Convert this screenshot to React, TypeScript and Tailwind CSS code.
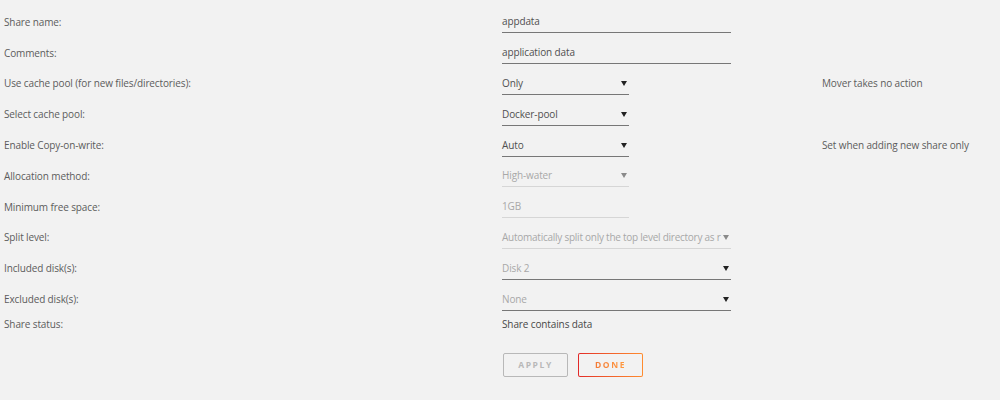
import React from 'react';

type Row = {
  label: string;
  value: string;
  kind: 'input' | 'select' | 'text';
  wide?: boolean;
  disabled?: boolean;
  note?: string;
};

const rows: Row[] = [
  { label: 'Share name:', value: 'appdata', kind: 'input', wide: true },
  { label: 'Comments:', value: 'application data', kind: 'input', wide: true },
  { label: 'Use cache pool (for new files/directories):', value: 'Only', kind: 'select', note: 'Mover takes no action' },
  { label: 'Select cache pool:', value: 'Docker-pool', kind: 'select' },
  { label: 'Enable Copy-on-write:', value: 'Auto', kind: 'select', note: 'Set when adding new share only' },
  { label: 'Allocation method:', value: 'High-water', kind: 'select', disabled: true },
  { label: 'Minimum free space:', value: '1GB', kind: 'input', disabled: true },
  { label: 'Split level:', value: 'Automatically split only the top level directory as r', kind: 'select', wide: true, disabled: true },
  { label: 'Included disk(s):', value: 'Disk 2', kind: 'select', wide: true, disabled: true },
  { label: 'Excluded disk(s):', value: 'None', kind: 'select', wide: true, disabled: true },
];

// disabled fields keep a dark line only for the disk pickers
const darkLine = (row: Row) => !row.disabled || row.value === 'Disk 2' || row.value === 'None';

function Caret({ light }: { light?: boolean }) {
  return (
    <svg width="6" height="5" viewBox="0 0 6 5" className="shrink-0">
      <path d="M0 0h6L3 5z" fill={light ? '#8a8a8a' : '#222'} />
    </svg>
  );
}

function Control({ row }: { row: Row }) {
  const width = row.wide ? 'w-[229px]' : 'w-[127px]';
  const line = darkLine(row) ? 'border-[#777]' : 'border-[#d6d6d6]';
  const text = row.disabled ? 'text-[#a8a8a8]' : 'text-[#505050]';
  return (
    <div className={`${width} h-[22px] flex items-center justify-between border-b ${line} ${text} pr-[2px]`}>
      <span className={`whitespace-nowrap ${row.label === 'Split level:' ? 'tracking-[-0.25px]' : ''}`}>{row.value}</span>
      {row.kind === 'select' && <Caret light={!darkLine(row)} />}
    </div>
  );
}

export default function App() {
  return (
    <div
      className="w-[1000px] h-[400px] bg-[#f2f2f2] text-[10px] tracking-[-0.12px] text-[#555] pt-[7px] pl-[4px] overflow-hidden"
      style={{ fontFamily: '"Open Sans", "DejaVu Sans", sans-serif' }}
    >
      {rows.map((row) => (
        <div key={row.label} className="flex items-center h-[30.8px]">
          <div className="w-[498px] text-[#5c5c5c]">{row.label}</div>
          <div className="w-[320px]">
            <Control row={row} />
          </div>
          {row.note && <div className="text-[#5c5c5c]">{row.note}</div>}
        </div>
      ))}
      <div className="flex items-center h-[20px]">
        <div className="w-[498px] text-[#5c5c5c]">Share status:</div>
        <div className="text-[#484848]">Share contains data</div>
      </div>
      <div className="flex gap-[10px] pl-[499px] mt-[18px]">
        <button className="w-[65px] h-[24px] rounded-[2px] border border-[#b8b8b8] text-[8.5px] font-bold tracking-[1.6px] text-[#b8b8b8]">
          APPLY
        </button>
        <div className="w-[65px] h-[24px] rounded-[2px] p-px bg-gradient-to-r from-[#e22828] to-[#ff8c2f]">
          <button className="w-full h-full rounded-[1px] bg-[#f2f2f2] text-[8.5px] font-bold tracking-[1.6px]">
            <span className="bg-gradient-to-r from-[#f47a35] to-[#ff9a40] bg-clip-text text-transparent">DONE</span>
          </button>
        </div>
      </div>
    </div>
  );
}
